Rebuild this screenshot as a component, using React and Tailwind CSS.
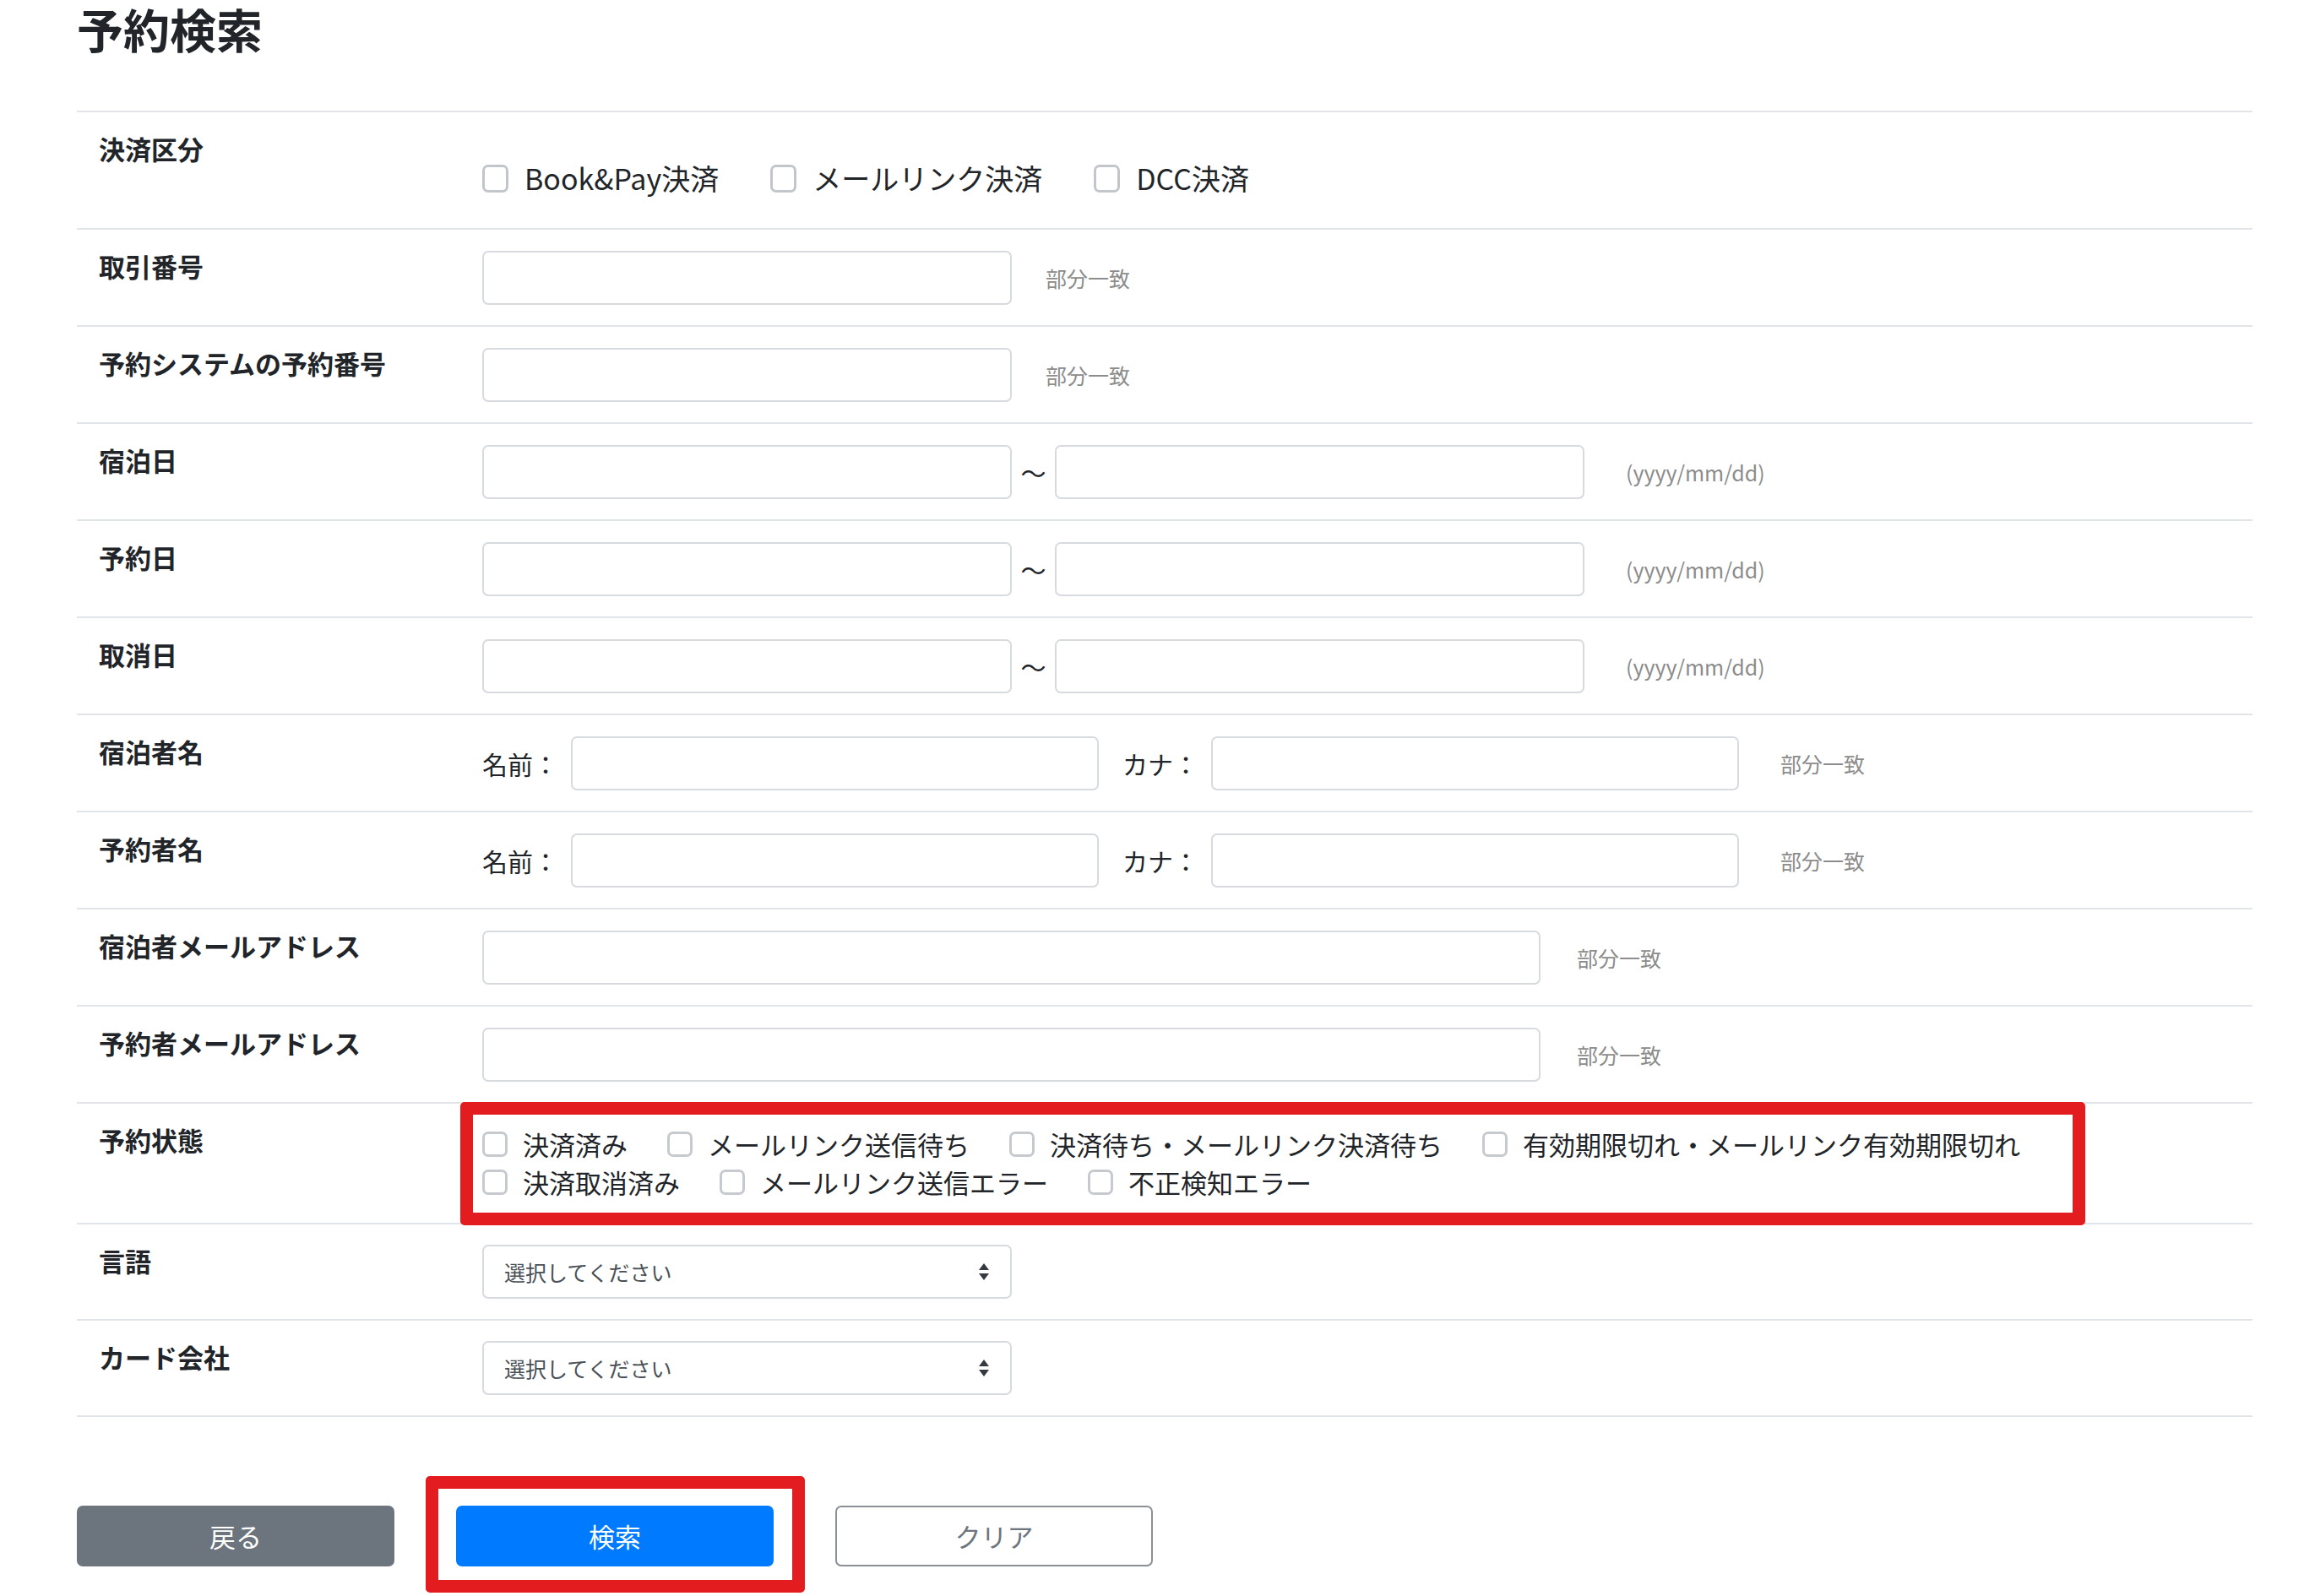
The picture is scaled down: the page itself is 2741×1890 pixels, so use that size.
import React from "react";

const inputCls =
  "h-[64px] border-2 border-[#d7dbdf] rounded-[7px] bg-white outline-none px-[20px] text-[28px] text-[#495057]";

function Hint({ children, className = "" }) {
  return (
    <span className={`text-[25px] leading-none text-[#8c8c8c] ${className}`}>
      {children}
    </span>
  );
}

function Row({ label, children, valueClass = "pt-[25px] pb-[24px]", extra = null }) {
  return (
    <div className="relative flex border-t-2 border-[#e1e4e8]">
      <div className="w-[480px] shrink-0 pl-[26px] pt-[22px] text-[31px] leading-[42px] font-bold text-[#212529]">
        {label}
      </div>
      <div className={`flex-1 ${valueClass}`}>{children}</div>
      {extra}
    </div>
  );
}

function TextRow({ label, width = "w-[627px]", gap = "ml-[40px]" }) {
  return (
    <Row label={label}>
      <div className="flex items-center">
        <input type="text" className={`${inputCls} ${width}`} />
        <Hint className={gap}>部分一致</Hint>
      </div>
    </Row>
  );
}

function DateRow({ label }) {
  return (
    <Row label={label}>
      <div className="flex items-center">
        <input type="text" className={`${inputCls} w-[627px]`} />
        <span className="w-[51px] text-center text-[30px] leading-none text-[#212529]">～</span>
        <input type="text" className={`${inputCls} w-[627px]`} />
        <Hint className="ml-[49px]">(yyyy/mm/dd)</Hint>
      </div>
    </Row>
  );
}

function NameRow({ label }) {
  return (
    <Row label={label}>
      <div className="flex items-center text-[30px] text-[#212529]">
        <span className="w-[105px] leading-none">名前：</span>
        <input type="text" className={`${inputCls} w-[625px]`} />
        <span className="ml-[28px] w-[105px] leading-none">カナ：</span>
        <input type="text" className={`${inputCls} w-[625px]`} />
        <Hint className="ml-[49px]">部分一致</Hint>
      </div>
    </Row>
  );
}

function SelectRow({ label }) {
  return (
    <Row label={label} valueClass="pt-[24px] pb-[24px]">
      <div className="flex h-[64px] w-[627px] items-center justify-between rounded-[7px] border-2 border-[#d7dbdf] bg-white pl-[24px] pr-[24px]">
        <span className="text-[25px] leading-none text-[#495057]">選択してください</span>
        <svg width="14" height="22" viewBox="0 0 14 22" className="text-[#343a40]">
          <path d="M7 1 L13 9 L1 9 Z" fill="currentColor" />
          <path d="M1 13 L13 13 L7 21 Z" fill="currentColor" />
        </svg>
      </div>
    </Row>
  );
}

function BigCheck({ label, className = "" }) {
  return (
    <label className={`flex items-center h-[46px] ${className}`}>
      <input
        type="checkbox"
        className="appearance-none w-[31px] h-[33px] rounded-[7px] border-[3px] border-[#c2c6cb] bg-white"
      />
      <span className="ml-[19px] text-[34px] leading-none text-[#212529]">{label}</span>
    </label>
  );
}

function SmallCheck({ label }) {
  return (
    <label className="flex items-center h-[45px] mr-[47px]">
      <input
        type="checkbox"
        className="appearance-none w-[30px] h-[30px] rounded-[7px] border-[3px] border-[#c6cacf] bg-white"
      />
      <span className="ml-[18px] text-[31px] leading-none text-[#212529]">{label}</span>
    </label>
  );
}

export default function App() {
  return (
    <div className="min-h-screen bg-white font-['Noto_Sans_CJK_JP','Noto_Sans',sans-serif]">
      <div className="ml-[91px] w-[2576px]">
        <h1 className="text-[55px] leading-[66px] font-bold text-[#212529] mb-[65px]">予約検索</h1>

        <div className="border-b-2 border-[#e1e4e8]">
          <Row label="決済区分" valueClass="pt-[55px] pb-[36px]">
            <div className="flex">
              <BigCheck label="Book&Pay決済" className="mr-[61px]" />
              <BigCheck label="メールリンク決済" className="mr-[61px]" />
              <BigCheck label="DCC決済" />
            </div>
          </Row>

          <TextRow label="取引番号" />
          <TextRow label="予約システムの予約番号" />
          <DateRow label="宿泊日" />
          <DateRow label="予約日" />
          <DateRow label="取消日" />
          <NameRow label="宿泊者名" />
          <NameRow label="予約者名" />
          <TextRow label="宿泊者メールアドレス" width="w-[1253px]" gap="ml-[43px]" />
          <TextRow label="予約者メールアドレス" width="w-[1253px]" gap="ml-[43px]" />

          <Row
            label="予約状態"
            valueClass="pt-[25px] pb-[26px]"
            extra={
              <div className="pointer-events-none absolute left-[454px] top-[-2px] z-10 h-[146px] w-[1924px] rounded-[5px] border-[15px] border-[#e31d1f]" />
            }
          >
            <div className="flex">
              <SmallCheck label="決済済み" />
              <SmallCheck label="メールリンク送信待ち" />
              <SmallCheck label="決済待ち・メールリンク決済待ち" />
              <SmallCheck label="有効期限切れ・メールリンク有効期限切れ" />
            </div>
            <div className="flex">
              <SmallCheck label="決済取消済み" />
              <SmallCheck label="メールリンク送信エラー" />
              <SmallCheck label="不正検知エラー" />
            </div>
          </Row>

          <SelectRow label="言語" />
          <SelectRow label="カード会社" />
        </div>

        <div className="mt-[105px] flex gap-[73px]">
          <button className="h-[72px] w-[376px] rounded-[7px] bg-[#6c757d] text-[31px] text-white">
            戻る
          </button>
          <div className="relative">
            <button className="h-[72px] w-[376px] rounded-[7px] bg-[#007bff] text-[31px] text-white">
              検索
            </button>
            <div className="pointer-events-none absolute left-[-36px] top-[-35px] h-[138px] w-[449px] rounded-[5px] border-[15px] border-[#e31d1f]" />
          </div>
          <button className="h-[72px] w-[376px] rounded-[7px] border-2 border-[#8a9096] bg-white text-[31px] text-[#6c757d]">
            クリア
          </button>
        </div>
      </div>
    </div>
  );
}
